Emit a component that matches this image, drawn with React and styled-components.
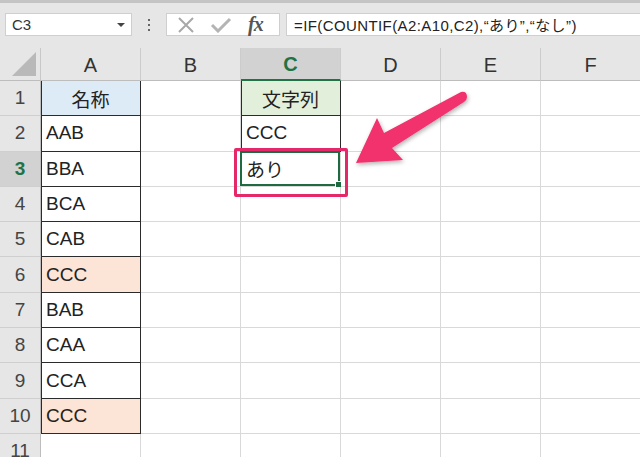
import React from "react";
import styled, { createGlobalStyle } from "styled-components";

const Global = createGlobalStyle`
  html, body { margin: 0; padding: 0; background: #fff; }
  body { font-family: "Liberation Sans", Arial, "Noto Sans CJK JP", sans-serif; }
`;

const Frame = styled.div`
  position: relative;
  width: 640px;
  height: 457px;
  overflow: hidden;
  background: #fff;
`;

const TopBar = styled.div`
  background: #e6e6e6;
  border-top: 3px solid #c4c4c4;
  display: flex;
  align-items: flex-start;
  padding-top: 10px;
  box-sizing: border-box;
  height: 48px;
`;

const NameBox = styled.div`
  margin-left: 5px;
  width: 127px;
  height: 23px;
  box-sizing: border-box;
  background: #fff;
  border: 1px solid #cfcfcf;
  display: flex;
  align-items: center;
  justify-content: space-between;
  padding: 0 6px 0 6px;
  font-size: 15px;
  color: #333;
`;

const Caret = styled.span`
  width: 0;
  height: 0;
  border-left: 4px solid transparent;
  border-right: 4px solid transparent;
  border-top: 4px solid #444;
`;

const Dots = styled.div`
  width: 34px;
  height: 23px;
  display: flex;
  flex-direction: column;
  align-items: center;
  justify-content: center;
  gap: 3px;
  & > span {
    width: 2px;
    height: 2px;
    background: #666;
  }
`;

const ButtonGroup = styled.div`
  width: 114px;
  height: 23px;
  box-sizing: border-box;
  background: #fff;
  border: 1px solid #cfcfcf;
  display: flex;
  align-items: center;
  padding-left: 9px;
  gap: 14px;
`;

const Fx = styled.span`
  font-family: "Liberation Serif", "Times New Roman", serif;
  font-style: italic;
  font-weight: bold;
  font-size: 20px;
  color: #555;
  margin-left: 2px;
  letter-spacing: -1px;
`;

const FormulaBox = styled.div`
  margin-left: 6px;
  flex: 1;
  height: 23px;
  box-sizing: border-box;
  background: #fff;
  border: 1px solid #cfcfcf;
  border-right: none;
  display: flex;
  align-items: center;
  padding-left: 7px;
  font-size: 15px;
  color: #222;
  white-space: nowrap;
  letter-spacing: 0.4px;
`;

const Sheet = styled.div`
  display: grid;
  grid-template-columns: 41px repeat(6, 100px);
  grid-template-rows: 33px repeat(11, 35.3px);
`;

const Corner = styled.div`
  background: #e6e6e6;
  border-right: 1px solid #c8c8c8;
  border-bottom: 1px solid #bdbdbd;
  box-sizing: border-box;
  position: relative;
  &::after {
    content: "";
    position: absolute;
    right: 4px;
    bottom: 4px;
    width: 0;
    height: 0;
    border-left: 24px solid transparent;
    border-bottom: 24px solid #b9b9b9;
  }
`;

const ColHead = styled.div`
  background: ${(p) => (p.$active ? "#d2d2d2" : "#e6e6e6")};
  color: ${(p) => (p.$active ? "#217346" : "#333")};
  font-weight: ${(p) => (p.$active ? "bold" : "normal")};
  border-right: 1px solid #cccccc;
  border-bottom: ${(p) => (p.$active ? "2px solid #217346" : "1px solid #bdbdbd")};
  box-sizing: border-box;
  display: flex;
  align-items: center;
  justify-content: center;
  font-size: 20px;
  padding-top: 2px;
`;

const RowHead = styled.div`
  background: ${(p) => (p.$active ? "#d2d2d2" : "#e6e6e6")};
  color: ${(p) => (p.$active ? "#217346" : "#444")};
  font-weight: ${(p) => (p.$active ? "bold" : "normal")};
  border-right: 1px solid #bdbdbd;
  border-bottom: 1px solid #cfcfcf;
  box-sizing: border-box;
  display: flex;
  align-items: center;
  justify-content: center;
  font-size: 19px;
`;

const Cell = styled.div`
  position: relative;
  box-sizing: border-box;
  background: ${(p) => p.$bg || "#fff"};
  border-right: 1px solid ${(p) => (p.$boxed ? "#2b2b2b" : "#d9d9d9")};
  border-bottom: 1px solid ${(p) => (p.$boxed ? "#2b2b2b" : "#d9d9d9")};
  box-shadow: ${(p) => (p.$boxed ? "inset 1px 0 0 #2b2b2b" : "none")};
  display: flex;
  align-items: center;
  justify-content: ${(p) => (p.$center ? "center" : "flex-start")};
  padding-left: ${(p) => (p.$center ? "0" : "5px")};
  font-size: 19px;
  color: #222;
  font-family: "Liberation Sans", Arial, "Noto Sans CJK JP", sans-serif;
`;

const Selected = styled.div`
  position: absolute;
  inset: -1px 0 0 -1px;
  border: 2px solid #1e6b41;
  pointer-events: none;
  &::after {
    content: "";
    position: absolute;
    right: -4px;
    bottom: -4px;
    width: 5px;
    height: 5px;
    background: #1e6b41;
    border: 1px solid #fff;
  }
`;

const Highlight = styled.div`
  position: absolute;
  left: 234px;
  top: 148px;
  width: 114px;
  height: 49px;
  box-sizing: border-box;
  border: 3px solid #e5286a;
  border-radius: 2px;
  pointer-events: none;
`;

const Overlay = styled.svg`
  position: absolute;
  left: 0;
  top: 0;
  pointer-events: none;
`;

const cols = ["A", "B", "C", "D", "E", "F"];
const aData = ["名称", "AAB", "BBA", "BCA", "CAB", "CCC", "BAB", "CAA", "CCA", "CCC"];

function cellProps(r, c) {
  if (c === 0 && r <= 10) {
    const bg = r === 1 ? "#ddebf7" : r === 6 || r === 10 ? "#fce4d6" : "#fff";
    return { $boxed: true, $bg: bg, $center: r === 1, text: aData[r - 1] };
  }
  if (c === 2 && r === 1) return { $boxed: true, $bg: "#e2efda", $center: true, text: "文字列" };
  if (c === 2 && r === 2) return { $boxed: true, text: "CCC" };
  if (c === 2 && r === 3) return { text: "あり", selected: true };
  return {};
}

export default function App() {
  const rows = [];
  for (let r = 1; r <= 11; r++) {
    rows.push(
      <RowHead key={`rh${r}`} $active={r === 3}>
        {r}
      </RowHead>
    );
    cols.forEach((_, c) => {
      const { text, selected, ...rest } = cellProps(r, c);
      rows.push(
        <Cell key={`c${r}-${c}`} {...rest}>
          {text}
          {selected && <Selected />}
        </Cell>
      );
    });
  }

  return (
    <Frame>
      <Global />
      <TopBar>
        <NameBox>
          <span>C3</span>
          <Caret />
        </NameBox>
        <Dots>
          <span />
          <span />
          <span />
        </Dots>
        <ButtonGroup>
          <svg width="20" height="16" viewBox="0 0 20 16">
            <path d="M3 1 L17 15 M17 1 L3 15" stroke="#a8a8a8" strokeWidth="2" fill="none" />
          </svg>
          <svg width="22" height="16" viewBox="0 0 22 16">
            <path d="M2 8 L8 14 L20 2" stroke="#b4b4b4" strokeWidth="3" fill="none" />
          </svg>
          <Fx>fx</Fx>
        </ButtonGroup>
        <FormulaBox>=IF(COUNTIF(A2:A10,C2),“あり”,“なし”)</FormulaBox>
      </TopBar>
      <Sheet>
        <Corner />
        {cols.map((c) => (
          <ColHead key={c} $active={c === "C"}>
            {c}
          </ColHead>
        ))}
        {rows}
      </Sheet>
      <Highlight />
      <Overlay width="640" height="457" viewBox="0 0 640 457">
        <defs>
          <filter id="sh" x="-20%" y="-20%" width="140%" height="140%">
            <feDropShadow dx="1" dy="2" stdDeviation="2" floodColor="#000" floodOpacity="0.3" />
          </filter>
        </defs>
        <path
          d="M356 163 L377 118 L384 133 L461 92 Q467 91 467 97 Q467 100 464 102 L392 148 L403 160 Z"
          fill="#f2306d"
          filter="url(#sh)"
        />
      </Overlay>
    </Frame>
  );
}
